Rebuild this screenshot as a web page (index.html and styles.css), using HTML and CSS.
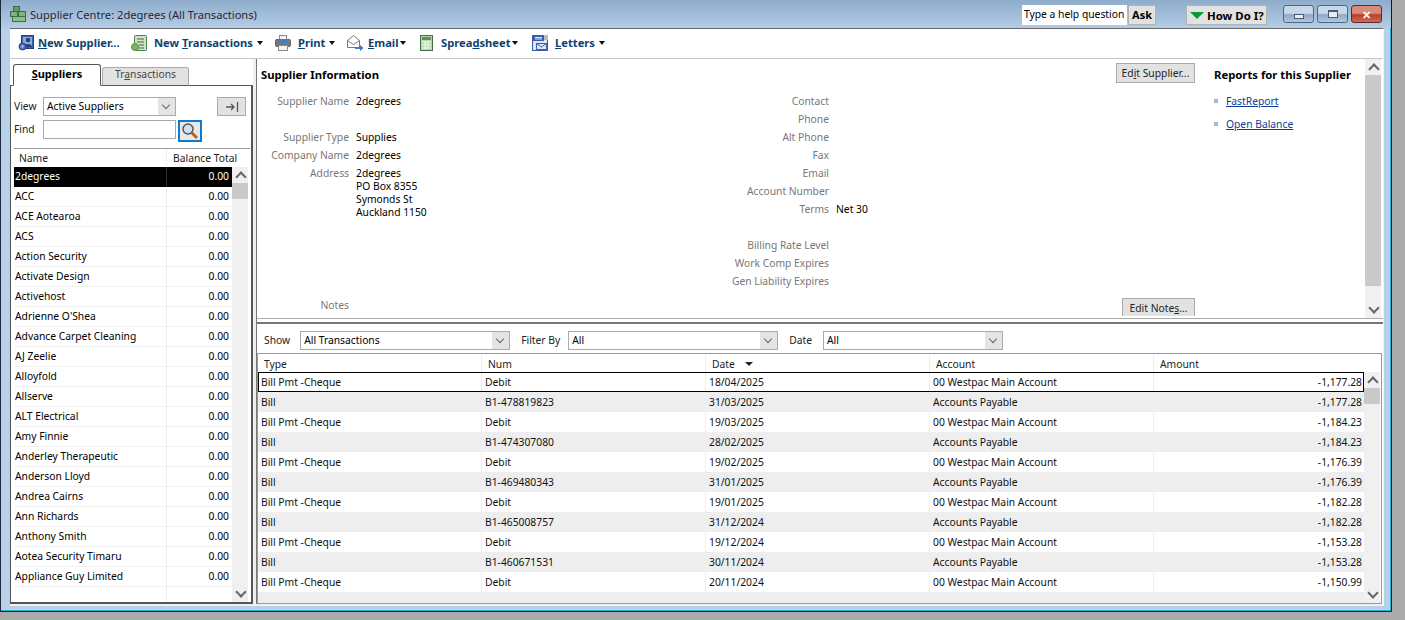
FILE: index.html
```html
<!DOCTYPE html>
<html lang="en">
<head>
  <meta charset="UTF-8">
  <title>Supplier Centre</title>
  <link rel="stylesheet" href="styles.css">
</head>
<body>
<div class="window">
  <div class="titlebar">
    <svg class="title-icon" width="16" height="16" viewBox="0 0 16 16"><rect x="3.500" y="0.500" width="6" height="5" fill="#5f9a6a" stroke="#3e6b4a"/><rect x="0.500" y="5.500" width="7" height="5" fill="#7fb37c" stroke="#3e6b4a"/><rect x="8.500" y="5.500" width="7" height="5" fill="#7fb37c" stroke="#3e6b4a"/><rect x="2.500" y="10.500" width="13" height="5" fill="#8fbf7c" stroke="#3e6b4a"/></svg>
    <span class="title-text">Supplier Centre: 2degrees (All Transactions)</span>
    <div class="title-tools">
      <span class="help-input">Type a help question</span>
      <span class="help-ask">Ask</span>
      <span class="how-do-i"><i class="green-arrow"></i><span>How Do I?</span></span>
      <div class="win-buttons">
        <span class="win-btn"><i class="min-glyph"></i></span>
        <span class="win-btn"><i class="max-glyph"></i></span>
        <span class="win-btn close">&#10005;</span>
      </div>
    </div>
  </div>

  <div class="client">
    <div class="toolbar">
      <span class="tool t-supplier">
        <svg width="16" height="16" viewBox="0 0 16 16"><rect x="3.500" y="0.500" width="12" height="13" fill="#3b62a8" stroke="#24407a"/><rect x="5" y="2" width="9" height="10" fill="#8fa9d8"/><circle cx="10" cy="5" r="2.300" fill="#24407a"/><path d="M6 12c0-4 8-4 8 0z" fill="#24407a"/><circle cx="4.500" cy="11.500" r="3.500" fill="#4f78c0" stroke="#24407a"/><circle cx="4.500" cy="11.500" r="1" fill="#dde6f5"/></svg>
        <span><u>N</u>ew Supplier...</span>
      </span>
      <span class="tool t-trans">
        <svg width="16" height="16" viewBox="0 0 16 16"><rect x="3.500" y="0.500" width="12" height="15" rx="1" fill="#cfe3c8" stroke="#4f7f4f"/><path d="M6 4h7M6 7h7M8 10h5M8 13h5" stroke="#3f6f3f"/><circle cx="4" cy="12" r="3.500" fill="#7fb35f" stroke="#5f8f4f"/></svg>
        <span>New <u>T</u>ransactions</span><i class="caret"></i>
      </span>
      <span class="tool t-print">
        <svg width="16" height="16" viewBox="0 0 16 16"><rect x="4.500" y="0.500" width="7" height="4" fill="#f4f4f4" stroke="#888"/><rect x="0.500" y="4.500" width="15" height="7" rx="1" fill="#777" stroke="#666"/><rect x="4" y="4" width="8" height="4" fill="#3f7fc0"/><rect x="3.500" y="10.500" width="9" height="5" fill="#f4f4f4" stroke="#888"/></svg>
        <span><u>P</u>rint</span><i class="caret"></i>
      </span>
      <span class="tool t-email">
        <svg width="17" height="16" viewBox="0 0 17 16"><path d="M0.500 5.500l6-5 6 5v7h-12z" fill="#fff" stroke="#777"/><path d="M0.500 5.500l6 4 6-4" fill="none" stroke="#777"/><path d="M8 12h5v-2l3.500 3-3.500 3v-2H8z" fill="#3b7cc4"/></svg>
        <span><u>E</u>mail</span><i class="caret tight"></i>
      </span>
      <span class="tool t-sheet">
        <svg width="13" height="16" viewBox="0 0 13 16"><rect x="0.500" y="0.500" width="12" height="15" fill="#b9d9a9" stroke="#3f6f3f"/><rect x="2" y="2" width="9" height="3" fill="#5f8f5f"/><path d="M2 7h9M2 10h9M2 13h9M5 6v8M8 6v8" stroke="#f3f8ef"/></svg>
        <span>Sprea<u>d</u>sheet</span><i class="caret tight"></i>
      </span>
      <span class="tool t-letters">
        <svg width="16" height="16" viewBox="0 0 16 16"><rect x="0.500" y="0.500" width="15" height="15" fill="#dde7f5" stroke="#3a5da5"/><rect x="1" y="1" width="11" height="5" fill="#3a5da5"/><rect x="12" y="0" width="4" height="5" fill="#bbb"/><path d="M3 2.500h7M3 4h7" stroke="#dde7f5"/><path d="M4.500 8.500h10v6h-10zM4.500 8.500l5 3.500 5-3.500" fill="none" stroke="#3a5da5"/></svg>
        <span><u>L</u>etters</span><i class="caret"></i>
      </span>
    </div>

    <div class="main">
      <div class="left-pane">
        <div class="tabs">
          <span class="tab active"><u>S</u>uppliers</span>
          <span class="tab">Tr<u>a</u>nsactions</span>
        </div>
        <div class="left-box">
          <div class="filter-row">
            <span class="filter-label">View</span>
            <span class="combo view-combo">Active Suppliers<i class="combo-arrow"></i></span>
            <span class="collapse-btn">
              <svg width="14" height="10" viewBox="0 0 14 10"><path d="M1 5h8M6 2l3 3-3 3M12.500 0v10" fill="none" stroke="#555" stroke-width="1.300"/></svg>
            </span>
          </div>
          <div class="filter-row find-row">
            <span class="filter-label">Find</span>
            <span class="find-input"></span>
            <span class="find-btn">
              <svg width="18" height="18" viewBox="0 0 18 18"><circle cx="7" cy="7" r="5" fill="#cfe2f5" stroke="#555" stroke-width="1.500"/><path d="M10.500 10.500l5.500 5.500" stroke="#b5651d" stroke-width="3"/></svg>
            </span>
          </div>
          <div class="list">
            <div class="list-head"><span class="name-col">Name</span><span class="bal-col">Balance Total</span></div>
            <div class="list-body">
              <div class="list-rows">
                <div class="list-row selected"><span class="name-col">2degrees</span><span class="bal-col">0.00</span></div>
                <div class="list-row"><span class="name-col">ACC</span><span class="bal-col">0.00</span></div>
                <div class="list-row"><span class="name-col">ACE Aotearoa</span><span class="bal-col">0.00</span></div>
                <div class="list-row"><span class="name-col">ACS</span><span class="bal-col">0.00</span></div>
                <div class="list-row"><span class="name-col">Action Security</span><span class="bal-col">0.00</span></div>
                <div class="list-row"><span class="name-col">Activate Design</span><span class="bal-col">0.00</span></div>
                <div class="list-row"><span class="name-col">Activehost</span><span class="bal-col">0.00</span></div>
                <div class="list-row"><span class="name-col">Adrienne O'Shea</span><span class="bal-col">0.00</span></div>
                <div class="list-row"><span class="name-col">Advance Carpet Cleaning</span><span class="bal-col">0.00</span></div>
                <div class="list-row"><span class="name-col">AJ Zeelie</span><span class="bal-col">0.00</span></div>
                <div class="list-row"><span class="name-col">Alloyfold</span><span class="bal-col">0.00</span></div>
                <div class="list-row"><span class="name-col">Allserve</span><span class="bal-col">0.00</span></div>
                <div class="list-row"><span class="name-col">ALT Electrical</span><span class="bal-col">0.00</span></div>
                <div class="list-row"><span class="name-col">Amy Finnie</span><span class="bal-col">0.00</span></div>
                <div class="list-row"><span class="name-col">Anderley Therapeutic</span><span class="bal-col">0.00</span></div>
                <div class="list-row"><span class="name-col">Anderson Lloyd</span><span class="bal-col">0.00</span></div>
                <div class="list-row"><span class="name-col">Andrea Cairns</span><span class="bal-col">0.00</span></div>
                <div class="list-row"><span class="name-col">Ann Richards</span><span class="bal-col">0.00</span></div>
                <div class="list-row"><span class="name-col">Anthony Smith</span><span class="bal-col">0.00</span></div>
                <div class="list-row"><span class="name-col">Aotea Security Timaru</span><span class="bal-col">0.00</span></div>
                <div class="list-row"><span class="name-col">Appliance Guy Limited</span><span class="bal-col">0.00</span></div>
                <div class="list-row"><span class="name-col"></span><span class="bal-col"></span></div>
              </div>
              <div class="scrollbar">
                <i class="sb-up"></i><i class="sb-thumb small"></i><i class="sb-down"></i>
              </div>
            </div>
          </div>
        </div>
      </div>

      <div class="right-pane">
        <div class="info">
          <div class="info-body">
            <div class="info-main">
              <div class="info-head">
                <h2>Supplier Information</h2>
                <span class="btn edit-supplier">Ed<u>i</u>t Supplier...</span>
              </div>
              <div class="info-cols">
                <div class="info-col first">
                  <div class="field"><span class="label">Supplier Name</span><span class="value">2degrees</span></div>
                  <div class="field"></div>
                  <div class="field"><span class="label">Supplier Type</span><span class="value">Supplies</span></div>
                  <div class="field"><span class="label">Company Name</span><span class="value">2degrees</span></div>
                  <div class="field"><span class="label">Address</span><span class="value address">2degrees<br>PO Box 8355<br>Symonds St<br>Auckland 1150</span></div>
                </div>
                <div class="info-col second">
                  <div class="field"><span class="label">Contact</span></div>
                  <div class="field"><span class="label">Phone</span></div>
                  <div class="field"><span class="label">Alt Phone</span></div>
                  <div class="field"><span class="label">Fax</span></div>
                  <div class="field"><span class="label">Email</span></div>
                  <div class="field"><span class="label">Account Number</span></div>
                  <div class="field"><span class="label">Terms</span><span class="value">Net 30</span></div>
                  <div class="field"></div>
                  <div class="field"><span class="label">Billing Rate Level</span></div>
                  <div class="field"><span class="label">Work Comp Expires</span></div>
                  <div class="field"><span class="label">Gen Liability Expires</span></div>
                </div>
              </div>
              <div class="notes-row">
                <span class="label">Notes</span>
                <span class="btn edit-notes">Edit Note<u>s</u>...</span>
              </div>
            </div>
            <div class="reports">
              <h3>Reports for this Supplier</h3>
              <div class="report-link"><i class="bullet"></i><a href="#">FastReport</a></div>
              <div class="report-link"><i class="bullet"></i><a href="#">Open Balance</a></div>
            </div>
          </div>
          <div class="scrollbar info-scroll">
            <i class="sb-up"></i><i class="sb-thumb fill"></i><i class="sb-down"></i>
          </div>
        </div>

        <div class="transactions">
          <div class="tx-filters">
            <span class="filter-label">Show</span>
            <span class="combo show-combo">All Transactions<i class="combo-arrow"></i></span>
            <span class="filter-label">Filter By</span>
            <span class="combo filter-combo">All<i class="combo-arrow"></i></span>
            <span class="filter-label">Date</span>
            <span class="combo date-combo">All<i class="combo-arrow"></i></span>
          </div>
          <div class="tx-table">
            <div class="tx-head">
              <span class="tc">Type</span><span class="tc">Num</span><span class="tc">Date<i class="sort-caret"></i></span><span class="tc">Account</span><span class="tc amount-head">Amount</span>
            </div>
            <div class="tx-body">
              <div class="tx-rows">
                <div class="tx-row current"><span class="tc">Bill Pmt -Cheque</span><span class="tc">Debit</span><span class="tc">18/04/2025</span><span class="tc">00 Westpac Main Account</span><span class="tc amount">-1,177.28</span></div>
                <div class="tx-row"><span class="tc">Bill</span><span class="tc">B1-478819823</span><span class="tc">31/03/2025</span><span class="tc">Accounts Payable</span><span class="tc amount">-1,177.28</span></div>
                <div class="tx-row"><span class="tc">Bill Pmt -Cheque</span><span class="tc">Debit</span><span class="tc">19/03/2025</span><span class="tc">00 Westpac Main Account</span><span class="tc amount">-1,184.23</span></div>
                <div class="tx-row"><span class="tc">Bill</span><span class="tc">B1-474307080</span><span class="tc">28/02/2025</span><span class="tc">Accounts Payable</span><span class="tc amount">-1,184.23</span></div>
                <div class="tx-row"><span class="tc">Bill Pmt -Cheque</span><span class="tc">Debit</span><span class="tc">19/02/2025</span><span class="tc">00 Westpac Main Account</span><span class="tc amount">-1,176.39</span></div>
                <div class="tx-row"><span class="tc">Bill</span><span class="tc">B1-469480343</span><span class="tc">31/01/2025</span><span class="tc">Accounts Payable</span><span class="tc amount">-1,176.39</span></div>
                <div class="tx-row"><span class="tc">Bill Pmt -Cheque</span><span class="tc">Debit</span><span class="tc">19/01/2025</span><span class="tc">00 Westpac Main Account</span><span class="tc amount">-1,182.28</span></div>
                <div class="tx-row"><span class="tc">Bill</span><span class="tc">B1-465008757</span><span class="tc">31/12/2024</span><span class="tc">Accounts Payable</span><span class="tc amount">-1,182.28</span></div>
                <div class="tx-row"><span class="tc">Bill Pmt -Cheque</span><span class="tc">Debit</span><span class="tc">19/12/2024</span><span class="tc">00 Westpac Main Account</span><span class="tc amount">-1,153.28</span></div>
                <div class="tx-row"><span class="tc">Bill</span><span class="tc">B1-460671531</span><span class="tc">30/11/2024</span><span class="tc">Accounts Payable</span><span class="tc amount">-1,153.28</span></div>
                <div class="tx-row"><span class="tc">Bill Pmt -Cheque</span><span class="tc">Debit</span><span class="tc">20/11/2024</span><span class="tc">00 Westpac Main Account</span><span class="tc amount">-1,150.99</span></div>
                <div class="tx-row"></div>
              </div>
              <div class="scrollbar">
                <i class="sb-up"></i><i class="sb-thumb small"></i><i class="sb-down"></i>
              </div>
            </div>
          </div>
        </div>
      </div>
    </div>
  </div>
</div>
</body>
</html>
```

FILE: styles.css
```css
* {
  box-sizing: border-box;
}
html, body {
  margin: 0;
  height: 620px;
  overflow: hidden;
}
body {
  background: #ababab;
  font-family: "Noto Sans", Tahoma, sans-serif;
  font-size: 10.300px;
  color: #000;
}
i {
  display: block;
}
a {
  color: #0b3c9c;
}

/* window frame */
.window {
  width: 1392px;
  height: 612px;
  padding: 0 7px 5px 9px;
  background: #b9d1e8;
  border-left: 1px solid #1d2a3a;
  border-right: 1px solid #0c1a24;
  border-bottom: 1px solid #0c1a24;
  box-shadow: inset -1px -1px 0 #27b5dc;
  display: flex;
  flex-direction: column;
}
.titlebar {
  height: 28px;
  margin: 0 -7px 0 -9px;
  padding: 0 8px 0 9px;
  background: linear-gradient(#8eaccb, #b4cde6);
  display: flex;
  align-items: center;
  flex-shrink: 0;
}
.title-icon {
  margin-right: 4px;
}
.title-text {
  font-size: 11.150px;
  color: #2a2438;
}
.title-tools {
  margin-left: auto;
  margin-top: 2px;
  display: flex;
  align-items: center;
}
.help-input {
  background: #fff;
  width: 105px;
  height: 20px;
  line-height: 19px;
  padding-left: 2px;
  white-space: nowrap;
}
.help-ask, .how-do-i {
  height: 20px;
  line-height: 17px;
  background: #e2e2e2;
  border: 1px solid #aeb3b8;
  font-weight: 700;
  font-size: 11px;
  white-space: nowrap;
}
.help-ask {
  width: 28px;
  text-align: center;
  margin: 0 30px 0 1px;
}
.how-do-i {
  width: 81px;
  display: flex;
  align-items: center;
  padding-left: 3px;
  margin-right: 16px;
  font-size: 11.400px;
}
.green-arrow {
  width: 0;
  height: 0;
  border-left: 7px solid transparent;
  border-right: 7px solid transparent;
  border-top: 7px solid #0a9a3a;
  margin-right: 3px;
}
.win-buttons {
  display: flex;
  gap: 3px;
  margin: -2px 1px 0 0;
}
.win-btn {
  width: 31px;
  height: 18px;
  border: 1px solid #4d6684;
  border-radius: 3px;
  background: linear-gradient(#c6d8ea 45%, #8fa9c6 55%, #b2c8de);
  display: flex;
  align-items: center;
  justify-content: center;
}
.win-btn.close {
  border-color: #5e2a2a;
  background: linear-gradient(#d98a7a 45%, #b8402c 55%, #cf6a55);
  color: #fff;
  font-weight: 700;
  font-size: 11px;
}
.min-glyph {
  width: 10px;
  height: 5px;
  margin-top: 5px;
  background: #e6edf5;
  border: 1px solid #4a5a6c;
}
.max-glyph {
  width: 10px;
  height: 8px;
  background: #e6edf5;
  border: 1px solid #4a5a6c;
  border-top-width: 2px;
}
.client {
  flex: 1;
  min-height: 0;
  background: #fff;
  border-top: 1px solid #6a6a6a;
  border-right: 1px solid #eef4fa;
  display: flex;
  flex-direction: column;
}

/* toolbar */
.toolbar {
  height: 30px;
  flex-shrink: 0;
  padding: 0 0 2px 8px;
  background: #fff;
  border-bottom: 1px solid #c8c8c8;
  display: flex;
  align-items: center;
}
.tool {
  display: flex;
  align-items: center;
  color: #0f3f6f;
  font-weight: 700;
  font-size: 11.200px;
  white-space: nowrap;
}
.tool svg {
  margin-right: 4px;
}
.t-supplier { width: 113px; }
.t-trans { width: 144px; }
.t-print { width: 72px; }
.t-email { width: 73px; }
.t-sheet { width: 112px; }
.t-sheet svg { margin-right: 8px; }
.t-trans svg, .t-print svg, .t-letters svg { margin-right: 7px; }
.caret {
  width: 0;
  height: 0;
  border-left: 3px solid transparent;
  border-right: 3px solid transparent;
  border-top: 4px solid #111;
  margin-left: 4px;
}
.caret.tight {
  margin-left: 1px;
}

/* layout */
.main {
  flex: 1;
  min-height: 0;
  display: flex;
  background: #f0f0f0;
  padding-bottom: 2px;
}
.left-pane {
  width: 243px;
  flex-shrink: 0;
  padding-top: 5px;
  background: #fff;
  display: flex;
  flex-direction: column;
}
.right-pane {
  flex: 1;
  min-width: 0;
  margin-left: 3px;
  border-left: 1px solid #777;
  display: flex;
  flex-direction: column;
  background: #fff;
}

/* left pane */
.tabs {
  display: flex;
  padding-left: 3px;
  height: 22px;
  align-items: flex-end;
  position: relative;
  z-index: 1;
  margin-bottom: -1px;
}
.tab {
  height: 19px;
  width: 87px;
  text-align: center;
  line-height: 13px;
  background: #e2e2e2;
  border: 1px solid #aaa;
  border-bottom: 1px solid #555;
  border-radius: 3px 3px 0 0;
  margin-right: 1px;
  color: #444;
}
.tab.active {
  height: 22px;
  background: #fff;
  width: 88px;
  color: #000;
  font-weight: 700;
  font-size: 11px;
  border-color: #555;
  border-bottom-color: #fff;
  line-height: 18px;
}
.left-box {
  flex: 1;
  min-height: 0;
  border: 1px solid #555;
  border-right-width: 2px;
  border-bottom-width: 2px;
  padding-top: 11px;
  display: flex;
  flex-direction: column;
}
.filter-row {
  display: flex;
  align-items: center;
  height: 19px;
  padding-left: 3px;
}
.filter-row.find-row {
  height: 23px;
  margin-top: 4px;
  align-items: flex-start;
}
.find-row .filter-label {
  line-height: 19px;
}
.left-box .filter-label {
  width: 29px;
  padding-bottom: 1px;
}
.filter-label {
  color: #222;
}
.combo {
  height: 19px;
  line-height: 17px;
  border: 1px solid #aaa;
  background: #fff;
  padding-left: 3px;
  position: relative;
  display: block;
}
.combo-arrow {
  position: absolute;
  right: 0;
  top: 0;
  width: 17px;
  height: 17px;
  background: #e4e4e4;
}
.combo-arrow::after {
  content: "";
  position: absolute;
  left: 5px;
  top: 4px;
  width: 5px;
  height: 5px;
  border-right: 1px solid #666;
  border-bottom: 1px solid #666;
  transform: rotate(45deg);
}
.view-combo {
  width: 133px;
}
.collapse-btn {
  width: 29px;
  height: 19px;
  margin-left: 41px;
  background: #e2e2e2;
  border: 1px solid #aaa;
  display: flex;
  align-items: center;
  justify-content: center;
}
.find-input {
  width: 133px;
  height: 19px;
  border: 1px solid #aaa;
  background: #fff;
}
.find-btn {
  width: 24px;
  height: 22px;
  margin-left: 2px;
  border: 2px solid #0f78cf;
  background: #e8e8e8;
  display: flex;
  align-items: center;
  justify-content: center;
}
.list {
  flex: 1;
  min-height: 0;
  margin: 5px 1px 0 3px;
  border-top: 1px solid #999;
  display: flex;
  flex-direction: column;
}
.list-head {
  height: 18px;
  display: flex;
  align-items: center;
  background: #fff;
  flex-shrink: 0;
  color: #222;
}
.list-head .name-col {
  padding-left: 5px;
}
.name-col {
  width: 153px;
  padding-left: 1px;
  border-right: 1px solid #eee;
  height: 100%;
  line-height: 19px;
  white-space: nowrap;
  overflow: hidden;
}
.bal-col {
  width: 65px;
  text-align: right;
  padding-right: 3px;
  height: 100%;
  line-height: 19px;
  white-space: nowrap;
}
.list-head .bal-col {
  width: 72px;
  text-align: left;
  padding-left: 6px;
}
.list-body {
  flex: 1;
  min-height: 0;
  display: flex;
}
.list-rows {
  width: 218px;
  overflow: hidden;
}
.list-row {
  height: 20px;
  display: flex;
  border-bottom: 1px solid #f0f0f0;
}
.list-row.selected {
  background: #000;
  color: #fff;
  border-bottom: 0;
}
.list-row.selected .name-col {
  border-right-color: #333;
}
.scrollbar {
  width: 16px;
  background: #f0f0f0;
  display: flex;
  flex-direction: column;
  flex-shrink: 0;
}
.sb-up, .sb-down {
  height: 16px;
  position: relative;
  flex-shrink: 0;
}
.sb-up::after, .sb-down::after {
  content: "";
  position: absolute;
  left: 5px;
  width: 6px;
  height: 6px;
  border-left: 2px solid #666;
  border-top: 2px solid #666;
  transform: rotate(45deg);
  top: 6px;
}
.sb-down::after {
  transform: rotate(225deg);
  top: 2px;
}
.sb-thumb {
  background: #c9c9c9;
}
.sb-thumb.small {
  height: 16px;
}
.sb-thumb.fill {
  height: 211px;
}
.sb-down {
  margin-top: auto;
}

/* supplier info */
.info {
  height: 260px;
  flex-shrink: 0;
  display: flex;
  border-bottom: 1px solid #aaa;
}
.info-body {
  flex: 1;
  min-width: 0;
  display: flex;
}
.info-main {
  width: 938px;
  display: flex;
  flex-direction: column;
  padding-left: 4px;
}
.info-head {
  display: flex;
  justify-content: space-between;
  height: 33px;
  padding-top: 4px;
}
h2, h3 {
  margin: 0;
  font-size: 11.300px;
  font-weight: 700;
  line-height: 24px;
}
.btn {
  height: 20px;
  line-height: 18px;
  text-align: center;
  background: #e2e2e2;
  border: 1px solid #aaa;
  color: #222;
  display: block;
}
.edit-supplier {
  width: 79px;
}
.info-cols {
  display: flex;
  height: 204px;
}
.info-col {
  display: flex;
  flex-direction: column;
}
.info-col.first {
  width: 448px;
}
.field {
  height: 18px;
  display: flex;
  line-height: 18px;
}
.label {
  color: #777;
  text-align: right;
  white-space: nowrap;
  flex-shrink: 0;
}
.first .label, .notes-row .label {
  width: 88px;
}
.second .label {
  width: 120px;
}
.value {
  margin-left: 7px;
  white-space: nowrap;
}
.address {
  line-height: 13px;
  padding-top: 3px;
}
.notes-row {
  display: flex;
  justify-content: space-between;
  height: 20px;
  line-height: 18px;
}
.edit-notes {
  width: 73px;
  height: 18px;
  border-bottom: 0;
  margin-top: 2px;
}
.reports {
  padding: 4px 0 0 19px;
  flex: 1;
}
.reports h3 {
  margin-bottom: 2px;
}
.report-link {
  display: flex;
  align-items: center;
  height: 23px;
  color: #0b3c9c;
}
.bullet {
  width: 4px;
  height: 4px;
  background: #a8b8cc;
  margin-right: 8px;
}
.info-scroll {
  margin-right: 2px;
}

/* transactions */
.transactions {
  flex: 1;
  min-height: 0;
  border-top: 2px solid #777;
  margin-top: 3px;
  display: flex;
  flex-direction: column;
}
.tx-filters {
  height: 29px;
  padding: 7px 0 0 7px;
  display: flex;
  align-items: flex-start;
  flex-shrink: 0;
}
.tx-filters .filter-label {
  line-height: 19px;
}
.show-combo {
  width: 210px;
  margin: 0 11px 0 10px;
}
.filter-combo {
  width: 210px;
  margin: 0 11px 0 8px;
}
.date-combo {
  width: 180px;
  margin-left: 11px;
}
.tx-table {
  flex: 1;
  min-height: 0;
  margin-right: 1px;
  border: 1px solid #999;
  display: flex;
  flex-direction: column;
}
.tx-head {
  height: 18px;
  display: flex;
  flex-shrink: 0;
}
.tc {
  width: 224px;
  flex-shrink: 0;
  padding-left: 6px;
  border-right: 1px solid #eee;
  line-height: 18px;
  white-space: nowrap;
  display: flex;
  align-items: center;
  height: 100%;
  color: #222;
}
.tx-head .tc {
  padding-top: 2px;
}
.amount-head {
  border-right: 0;
}
.sort-caret {
  width: 0;
  height: 0;
  border-left: 4px solid transparent;
  border-right: 4px solid transparent;
  border-top: 4px solid #222;
  margin-left: 10px;
}
.tx-body {
  flex: 1;
  min-height: 0;
  display: flex;
}
.tx-rows {
  width: 1106px;
  overflow: hidden;
}
.tx-row {
  height: 20px;
  display: flex;
}
.tx-row:nth-child(even) {
  background: #eee;
}
.tx-row .tc {
  padding-left: 3px;
  color: #111;
}
.tx-row .tc.amount {
  width: 210px;
  border-right: 0;
  justify-content: flex-end;
  padding-right: 2px;
}
.tx-row.current {
  outline: 1px solid #000;
  outline-offset: -1px;
}
```
